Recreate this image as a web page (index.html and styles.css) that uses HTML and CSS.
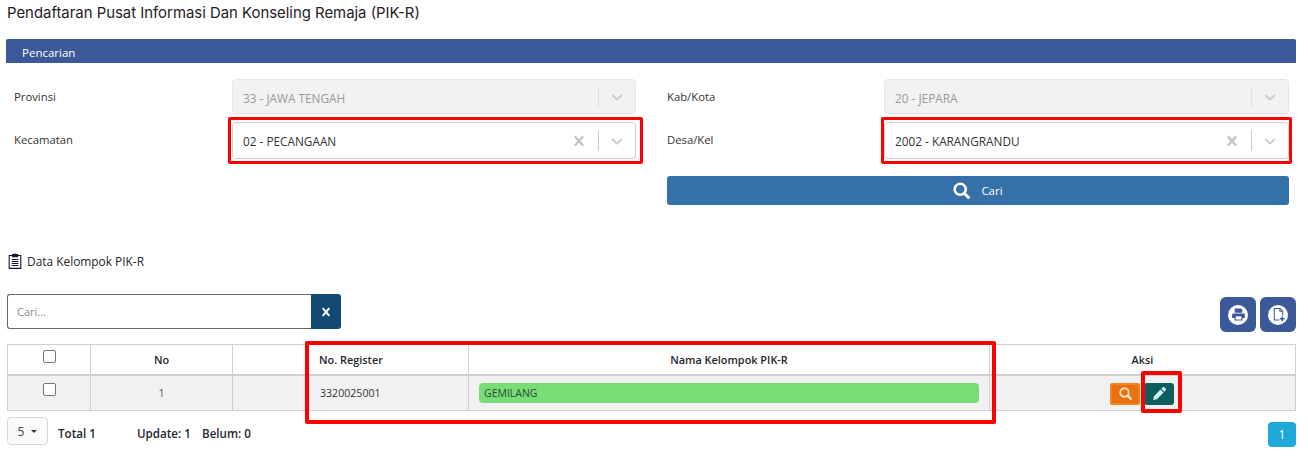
FILE: index.html
```html
<!DOCTYPE html>
<html lang="id">
<head>
<meta charset="utf-8">
<title>PIK-R</title>
<link rel="stylesheet" href="styles.css">
</head>
<body>
<svg class="defs" width="0" height="0" aria-hidden="true">
  <symbol id="chev" viewBox="0 0 20 20"><path d="M4.516 7.548c0.436-0.446 1.043-0.481 1.576 0l3.908 3.747 3.908-3.747c0.533-0.481 1.141-0.446 1.574 0 0.436 0.445 0.408 1.197 0 1.615-0.406 0.418-4.695 4.502-4.695 4.502-0.217 0.223-0.502 0.335-0.787 0.335s-0.57-0.112-0.789-0.335c0 0-4.287-4.084-4.695-4.502s-0.436-1.17 0-1.615z"/></symbol>
  <symbol id="cross" viewBox="0 0 20 20"><path d="M14.348 14.849c-0.469 0.469-1.229 0.469-1.697 0l-2.651-3.030-2.651 3.029c-0.469 0.469-1.229 0.469-1.697 0-0.469-0.469-0.469-1.229 0-1.697l2.758-3.15-2.759-3.152c-0.469-0.469-0.469-1.228 0-1.697s1.228-0.469 1.697 0l2.652 3.031 2.651-3.031c0.469-0.469 1.228-0.469 1.697 0s0.469 1.229 0 1.697l-2.758 3.152 2.758 3.15c0.469 0.469 0.469 1.229 0 1.698z"/></symbol>
  <symbol id="mag" viewBox="0 0 16 16"><circle cx="6.8" cy="6.8" r="5.2" fill="none" stroke="currentColor" stroke-width="2.4"/><path d="M10.6 10.6l4 4" fill="none" stroke="currentColor" stroke-width="2.8" stroke-linecap="round"/></symbol>
</svg>

<main class="page">
  <h1 class="title">Pendaftaran Pusat Informasi Dan Konseling Remaja (PIK-R)</h1>
  <div class="bar">Pencarian</div>

  <form class="form">
    <label class="lbl">Provinsi</label>
    <div class="sel sel-off"><span class="val">33 - JAWA TENGAH</span><i class="sep"></i><svg class="ic"><use href="#chev"/></svg></div>
    <label class="lbl lbl-r">Kab/Kota</label>
    <div class="sel sel-off"><span class="val">20 - JEPARA</span><i class="sep"></i><svg class="ic"><use href="#chev"/></svg></div>

    <label class="lbl">Kecamatan</label>
    <div class="sel sel-on"><span class="val">02 - PECANGAAN</span><svg class="ic ic-x"><use href="#cross"/></svg><i class="sep"></i><svg class="ic"><use href="#chev"/></svg><b class="mark mark-sel"></b></div>
    <label class="lbl lbl-r">Desa/Kel</label>
    <div class="sel sel-on"><span class="val">2002 - KARANGRANDU</span><svg class="ic ic-x"><use href="#cross"/></svg><i class="sep"></i><svg class="ic"><use href="#chev"/></svg><b class="mark mark-sel mark-sel-r"></b></div>

    <button class="cari" type="button"><svg class="cari-ic"><use href="#mag"/></svg>Cari</button>
  </form>

  <h2 class="data-h">
    <svg class="clip" viewBox="0 0 16 16" fill="none" stroke="#1c1230" stroke-width="1.1"><path d="M5 2.5H2.2v12.9h11.6V2.5H11"/><path fill="#1c1230" d="M5.5 1.6h1.6a1 1 0 0 1 1.8 0h1.6v2.2h-5z"/><path d="M4.6 6.5h6.8M4.6 8.5h6.8M4.6 10.5h6.8M4.6 12.5h6.8"/></svg>
    Data Kelompok PIK-R
  </h2>

  <div class="tools">
    <div class="search"><input class="search-in" placeholder="Cari..."><button class="search-x" type="button"><svg class="x-ic"><use href="#cross"/></svg></button></div>
    <div class="round-btns">
      <button class="rb" type="button"><span class="disc"><svg viewBox="0 0 16 16" class="disc-ic"><path fill="#3b5998" d="M4 1.5h6.5L12 3v3H4zM2.5 6.8h11a1.3 1.3 0 0 1 1.3 1.3v3.6H12.3v2.8H3.7v-2.8H1.2V8.1a1.3 1.3 0 0 1 1.3-1.3z"/><path fill="#fff" d="M5 10h6v3.4H5z"/></svg></span></button>
      <button class="rb" type="button"><span class="disc"><svg viewBox="0 0 16 16" class="disc-ic"><path fill="none" stroke="#3b5998" stroke-width="1.1" d="M9 13.8H3.5V1.5h6l3 3V9"/><path fill="none" stroke="#3b5998" stroke-width="1.1" d="M9.5 1.5v3h3"/><path fill="none" stroke="#3b5998" stroke-width="1.6" d="M12 10v5M9.5 12.5h5"/></svg></span></button>
    </div>
  </div>

  <div class="tbl-wrap">
    <table class="tbl">
      <colgroup><col class="c1"><col class="c2"><col class="c3"><col class="c4"><col class="c5"><col></colgroup>
      <thead>
        <tr><th><span class="chk"></span></th><th>No</th><th></th><th class="th-reg">No. Register</th><th>Nama Kelompok PIK-R</th><th>Aksi</th></tr>
      </thead>
      <tbody>
        <tr>
          <td class="ctr"><span class="chk"></span></td>
          <td class="ctr num">1</td>
          <td></td>
          <td class="reg">3320025001</td>
          <td class="nama"><div class="badge">GEMILANG</div></td>
          <td class="aksi">
            <span class="acts">
              <button class="act act-o" type="button"><svg class="act-ic"><use href="#mag"/></svg></button>
              <button class="act act-t" type="button"><svg class="act-ic act-pen" viewBox="0 0 16 16"><path fill="#d4f1ee" d="M11.2 1.6a1.6 1.6 0 0 1 2.3 0l.9.9a1.6 1.6 0 0 1 0 2.3l-1.2 1.2-3.2-3.2zM9.1 3.7l3.2 3.2-7.1 7.1-4 .9.9-4z"/></svg></button>
            </span>
          </td>
        </tr>
      </tbody>
    </table>
    <b class="mark mark-tbl"></b>
    <b class="mark mark-edit"></b>
  </div>

  <div class="foot">
    <span class="size">5<i class="caret"></i></span>
    <strong class="total">Total 1</strong>
    <strong class="upd">Update: 1</strong>
    <strong class="bel">Belum: 0</strong>
    <span class="pg">1</span>
  </div>
</main>
</body>
</html>
```
FILE: styles.css
```css
* { box-sizing: border-box; }
html, body { margin: 0; padding: 0; height: 458px; overflow: hidden; background: #fff; }
body { font-family: "Open Sans", "Noto Sans", sans-serif; font-size: 12px; color: #212529; }
.defs { position: absolute; }
button { border: 0; padding: 0; font-family: inherit; }

.page { padding: 0 12px 0 6px; }
.title { margin: 0; padding: 5px 0 0 1px; height: 39px; font-family: "Inter", sans-serif; font-weight: 400; font-size: 14.9px; line-height: 17px; color: #1f2227; }
.bar { height: 24px; background: #3b5998; color: #fff; padding-left: 16px; font-size: 11.5px; line-height: 27px; border-radius: 2px 2px 0 0; }

.form { display: grid; grid-template-columns: 218px 404px 248px 405px; grid-template-rows: 35px 37px 29px; row-gap: 8px; padding: 16px 0 0 8px; }
.lbl { line-height: 35px; color: #333; font-size: 11.3px; }
.lbl-r { margin-left: 31px; }

.sel { position: relative; display: flex; align-items: center; border-radius: 4px; border: 1px solid #ccc; padding: 0 9px 0 10px; font-size: 11.8px; }
.sel-off { background: #f2f2f2; border-color: #e6e6e6; color: #999; }
.sel-on { background: #fff; color: #333; }
.val { flex: 1; padding-top: 3px; }
.sel-on .val { padding-top: 1px; }
.sep { width: 1px; height: 21px; background: #ccc; margin: 0 9px 0 9px; }
.sel-off .sep { background: #e0e0e0; }
.ic { width: 18px; height: 18px; fill: #ccc; flex: none; }
.ic-x { width: 20px; height: 20px; fill: #c4c4c4; }

.mark { position: absolute; border: 4px solid #f00; background: none; pointer-events: none; border-radius: 2px; }
.mark-sel { left: -5px; top: -6px; width: 415px; height: 47px; border-width: 3px; }
.mark-sel-r { left: -4px; width: 411px; }

.cari { grid-column: 3 / 5; margin-left: 31px; margin-top: 9px; height: 29px; background: #3570a9; color: #fff; border-radius: 3px; display: flex; align-items: center; justify-content: center; font-size: 11.5px; }
.cari-ic { width: 17px; height: 17px; color: #fff; margin-right: 11px; }

.data-h { display: flex; align-items: center; gap: 4px; margin: 56px 0 0 1px; height: 18px; font-size: 11.9px; font-weight: 500; color: #24272c; }
.clip { width: 16px; height: 18px; }

.tools { display: flex; justify-content: space-between; margin: 24px 0 0 1px; height: 50px; }
.search { display: flex; height: 35px; width: 334px; }
.search-in { width: 305px; height: 35px; border: 1px solid #666; border-right: 0; border-radius: 3px 0 0 3px; padding: 0 9px; font: 11px "Open Sans", sans-serif; }
.search-in::placeholder { color: #888; }
.search-x { width: 30px; background: #124a73; border-radius: 0 3px 3px 0; display: flex; align-items: center; justify-content: center; }
.x-ic { width: 16px; height: 16px; fill: #fff; }
.round-btns { display: flex; gap: 4px; margin-top: 3px; height: 35px; }
.rb { width: 36px; height: 35px; background: #3b5998; border-radius: 6px; display: flex; align-items: center; justify-content: center; }
.disc { width: 20px; height: 20px; border-radius: 50%; background: #fff; display: flex; align-items: center; justify-content: center; }
.disc-ic { width: 15px; height: 15px; }

.tbl-wrap { position: relative; margin: 0 0 0 1px; }
.tbl { width: 1289px; border-collapse: collapse; table-layout: fixed; font-size: 11.5px; }
.c1 { width: 83px; } .c2 { width: 142px; } .c3 { width: 75px; } .c4 { width: 161px; } .c5 { width: 521px; }
.tbl th, .tbl td { border: 1px solid #cdd0d6; padding: 0; }
.tbl th { height: 30px; font-weight: 600; font-size: 10.9px; color: #24272c; text-align: center; border-bottom-width: 2px; }
.tbl th:nth-child(3), .tbl td:nth-child(3) { border-right-color: transparent; }
.tbl td { height: 36px; background: #f1f1f1; color: #333; font-size: 10.6px; }
.th-reg { text-align: left !important; padding-left: 11px !important; }
.ctr { text-align: center; }
.num { color: #3b5e80 !important; }
.reg { padding-left: 12px !important; }
.chk { display: inline-block; width: 13px; height: 13px; background: #fff; border: 1px solid #777; border-radius: 2px; vertical-align: 3px; }
.nama { padding: 0 10px !important; }
.badge { height: 20px; background: #77dd77; border-radius: 4px; padding-left: 5px; line-height: 20px; color: #2d4a35; font-size: 10.5px; }
.aksi { text-align: right; }
.acts { display: inline-flex; gap: 4px; margin: 2px 121px 0 0; vertical-align: middle; }
.act { width: 30px; height: 22px; border-radius: 3px; display: flex; align-items: center; justify-content: center; }
.act-o { background: #e8710e; box-shadow: inset 0 0 0 2px #f68120; color: #ffe0c2; }
.act-t { background: #0e5e60; }
.act-ic { width: 13px; height: 13px; }
.act-pen { width: 15px; height: 15px; }
.mark-tbl { left: 298px; top: -3px; width: 691px; height: 83px; }
.mark-edit { left: 1134px; top: 27px; width: 41px; height: 42px; }

.foot { display: flex; align-items: flex-start; height: 31px; margin: 6px 0 0 1px; font-size: 11.6px; color: #24272c; }
.size { display: flex; align-items: center; justify-content: center; gap: 7px; width: 41px; height: 28px; background: #fafafa; border: 1px solid #d6d6d6; border-radius: 4px; font-size: 12px; color: #444; }
.caret { width: 0; height: 0; border: 3px solid transparent; border-top: 3px solid #333; border-bottom: 0; }
.total, .upd, .bel { font-weight: 600; line-height: 16px; margin-top: 9px; }
.total { margin-left: 10px; width: 79px; }
.upd { width: 65px; }
.pg { margin: 5px 0 0 auto; width: 28px; height: 25px; background: #1fa8d8; color: #fff; border-radius: 4px; display: flex; align-items: center; justify-content: center; font-size: 12px; }
```
